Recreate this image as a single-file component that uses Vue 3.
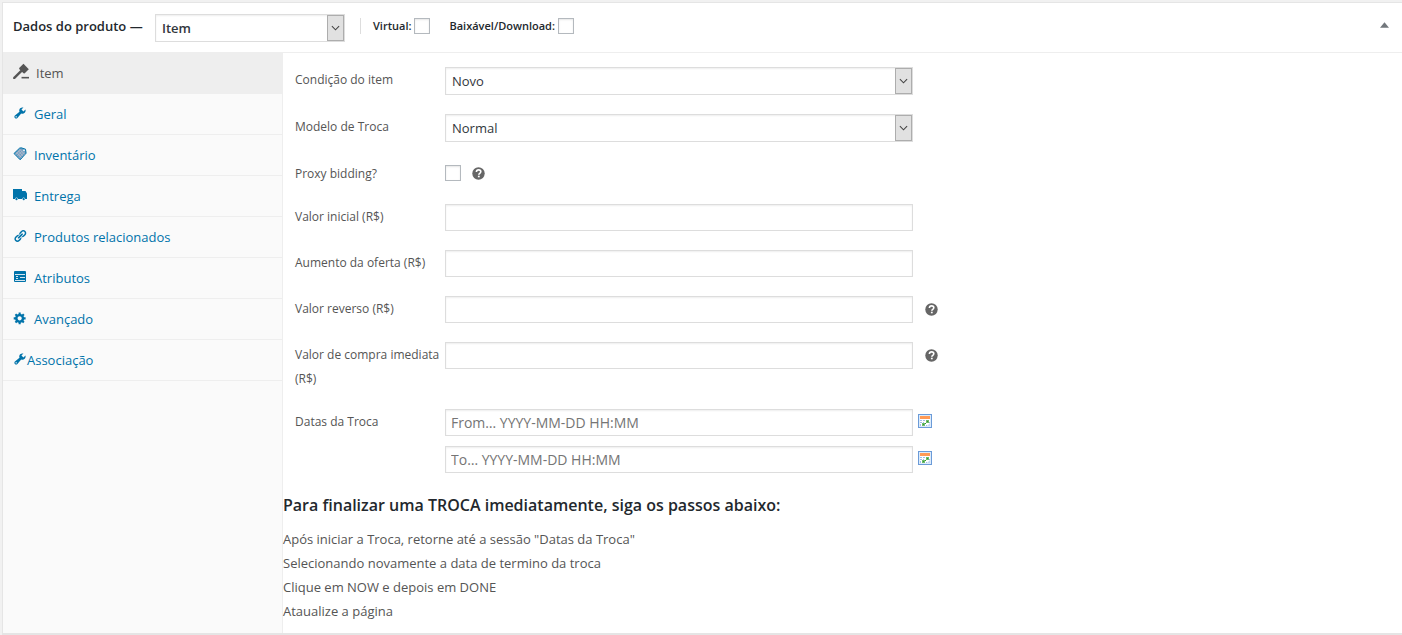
<script setup>
import { ref } from 'vue'

const productType = ref('Item')
const virtual = ref(false)
const downloadable = ref(false)
const proxy = ref(false)
const active = ref('item')

const tabs = [
  { id: 'item', label: 'Item', icon: 'hammer' },
  { id: 'geral', label: 'Geral', icon: 'wrench' },
  { id: 'inventario', label: 'Inventário', icon: 'tag' },
  { id: 'entrega', label: 'Entrega', icon: 'truck' },
  { id: 'relacionados', label: 'Produtos relacionados', icon: 'link' },
  { id: 'atributos', label: 'Atributos', icon: 'card' },
  { id: 'avancado', label: 'Avançado', icon: 'gear' },
  { id: 'associacao', label: 'Associação', icon: 'wrench', tight: true },
]

const selects = ref([
  { id: 'condicao', label: 'Condição do item', value: 'Novo', options: ['Novo', 'Usado'] },
  { id: 'modelo', label: 'Modelo de Troca', value: 'Normal', options: ['Normal', 'Reverso'] },
])

const prices = [
  { id: 'inicial', label: 'Valor inicial (R$)' },
  { id: 'aumento', label: 'Aumento da oferta (R$)' },
  { id: 'reverso', label: 'Valor reverso (R$)', help: true },
  { id: 'compra', label: 'Valor de compra imediata (R$)', help: true },
]

const dates = [
  { id: 'from', label: 'Início', placeholder: 'From… YYYY-MM-DD HH:MM' },
  { id: 'to', label: 'Fim', placeholder: 'To… YYYY-MM-DD HH:MM' },
]

const steps = [
  'Após iniciar a Troca, retorne até a sessão "Datas da Troca"',
  'Selecionando novamente a data de termino da troca',
  'Clique em NOW e depois em DONE',
  'Ataualize a página',
]
</script>

<template>
  <svg class="defs" aria-hidden="true">
    <symbol id="help" viewBox="0 0 13 13">
      <circle cx="6.5" cy="6.5" r="6.2" fill="#666" />
      <path d="M4.4 5c0-1.4 1-2.1 2.2-2.1S8.8 3.6 8.8 4.8c0 1.500-2 1.500-2 3" fill="none" stroke="#fff" stroke-width="1.6" />
      <rect x="5.9" y="8.7" width="1.8" height="1.6" fill="#fff" />
    </symbol>
    <symbol id="calendar" viewBox="0 0 14 14">
      <rect x=".5" y=".5" width="13" height="13" fill="#dcebfb" stroke="#6b9bd8" />
      <rect x="2" y="2" width="10" height="10" fill="#fff" />
      <rect x="2" y="2" width="10" height="3" fill="#ff9a55" />
      <path d="M2 6h2v1H2zM5 6h2v1H5zM8 6h1v1H8zM2 8h2v1H2zM5 8h1v1H5zM11 8h1v1h-1zM2 10h1v2H2zM8 11h1v1H8z" fill="#9fbce6" />
      <path d="M8 6h3v3H8zM4 9h3v3H4z" fill="#6fbb6b" />
      <path d="M9 7h1v1H9zM5 10h1v1H5zM7 9h1v1H7z" fill="#2f9a35" />
      <path d="M12 9v3H9z" fill="#c4d9f3" />
    </symbol>
    <symbol id="hammer" viewBox="0 0 15 15">
      <path d="M.2 13.4 7.3 6.3l1.6 1.6L1.8 15H.2z" />
      <path d="m5.800 4.800 4-4 5 5-4 4-1-.2-4-4z" />
      <path d="M8 13h7v1.500H8z" />
    </symbol>
    <symbol id="wrench" viewBox="0 0 20 20">
      <path d="M16.680 9.770c-1.340 1.340-3.300 1.670-4.950.99l-5.410 6.520c-.99.99-2.590.99-3.580 0s-.99-2.590 0-3.570l6.520-5.420c-.68-1.650-.35-3.610.99-4.950 1.280-1.280 3.120-1.620 4.720-1.060l-2.890 2.890 2.820 2.820 2.860-2.870c.53 1.580.18 3.390-1.080 4.650zM3.810 16.210c.4.390 1.040.39 1.430 0 .4-.4.400-1.040 0-1.430-.39-.4-1.030-.4-1.430 0-.39.39-.39 1.030 0 1.430z" />
    </symbol>
    <symbol id="tag" viewBox="0 0 14 14">
      <path d="M1 6.500 6.500 1.200 8.200.8l4.300 1.400.6 4L7.200 12.800z" fill="#6d9fc2" stroke="#0073aa" />
      <path d="m2.600 7.600 5-5M4.200 9.200l5.500-5.500M5.800 10.800l5.600-5.600M3.600 5.200l5 5.600M5.200 3.600l5 5.600M6.800 2.400l5 5.200" stroke="#c8bfcb" stroke-width=".7" fill="none" />
      <circle cx="11" cy="3.400" r=".8" fill="#fff" />
    </symbol>
    <symbol id="truck" viewBox="0 0 14 14">
      <path d="M0 1h9v2h3.500L14 5.500V11h-1.800a1.500 1.500 0 0 0-3 0H5a1.500 1.500 0 0 0-3 0H0z" />
      <circle cx="3.500" cy="11.200" r="1.100" />
      <circle cx="10.700" cy="11.200" r="1.100" />
    </symbol>
    <symbol id="link" viewBox="0 0 20 20">
      <path d="M17.740 2.760c1.680 1.690 1.680 4.410 0 6.100l-1.530 1.520c-1.120 1.120-2.700 1.470-4.140 1.090l2.620-2.610.76-.77.76-.76c.84-.84.84-2.200 0-3.040-.84-.85-2.200-.85-3.040 0l-.77.76-3.380 3.380c-.37-1.440-.02-3.020 1.100-4.140l1.520-1.530c1.690-1.680 4.420-1.680 6.100 0zM8.590 13.430l5.340-5.340c.42-.42.42-1.100 0-1.520-.44-.43-1.130-.39-1.530 0l-5.330 5.340c-.42.42-.42 1.100 0 1.520.44.430 1.130.39 1.520 0zm-.76 2.290l4.140-4.150c.38 1.440.03 3.020-1.090 4.140l-1.520 1.530c-1.690 1.680-4.410 1.680-6.100 0-1.680-1.680-1.680-4.420 0-6.100l1.530-1.520c1.120-1.120 2.700-1.470 4.140-1.100l-4.140 4.150c-.85.84-.85 2.200 0 3.050.84.840 2.200.84 3.040 0z" />
    </symbol>
    <symbol id="card" viewBox="0 0 14 14">
      <path d="M2 1h10a1 1 0 0 1 1 1v9a1 1 0 0 1-1 1H2a1 1 0 0 1-1-1V2a1 1 0 0 1 1-1z" />
      <path d="M2 4h10v1H2zM2 10h10v1H2zM3 6h2v1H3zM7 7h5v1H7zM3 8h2v1H3z" fill="#d6e6ef" />
    </symbol>
    <symbol id="gear" viewBox="0 0 20 20">
      <path d="M18 12h-2.180c-.17.700-.44 1.350-.81 1.930l1.540 1.540-2.100 2.100-1.540-1.540c-.58.360-1.230.63-1.910.79V19H8v-2.180c-.68-.16-1.330-.43-1.910-.79l-1.540 1.540-2.120-2.120 1.540-1.540c-.36-.58-.63-1.230-.79-1.910H1V9.030h2.170c.16-.7.440-1.350.8-1.940L2.430 5.550l2.100-2.100 1.540 1.540c.58-.37 1.240-.64 1.930-.81V2h3v2.180c.68.160 1.330.43 1.910.79l1.540-1.540 2.120 2.120-1.540 1.540c.36.590.64 1.240.8 1.940H18V12zm-8.500 1.500c1.660 0 3-1.340 3-3s-1.340-3-3-3-3 1.340-3 3 1.340 3 3 3z" />
    </symbol>
  </svg>

  <section class="panel">
    <header class="head">
      <label class="title" for="product-type">Dados do produto —</label>
      <span class="select type">
        <select id="product-type" v-model="productType">
          <option>Item</option>
          <option>Produto simples</option>
        </select>
        <span class="arrow"><svg viewBox="0 0 10 6"><path d="m1 1 4 4 4-4" /></svg></span>
      </span>
      <div class="flags">
        <label>Virtual:<input v-model="virtual" type="checkbox"></label>
        <label>Baixável/Download:<input v-model="downloadable" type="checkbox"></label>
      </div>
      <button class="toggle" type="button" aria-label="Alternar painel">
        <svg viewBox="0 0 8 5"><path d="M0 5 4 0l4 5z" /></svg>
      </button>
    </header>

    <div class="body">
      <nav class="tabs">
        <a
          v-for="t in tabs"
          :key="t.id"
          href="#"
          :class="{ active: active === t.id, tight: t.tight }"
          @click.prevent="active = t.id"
        >
          <svg :class="t.icon"><use :href="'#' + t.icon" /></svg>
          <span>{{ t.label }}</span>
        </a>
      </nav>

      <main class="content">
        <form class="fields" @submit.prevent>
          <div v-for="s in selects" :key="s.id" class="row">
            <label :for="s.id">{{ s.label }}</label>
            <span class="select">
              <select :id="s.id" v-model="s.value">
                <option v-for="o in s.options" :key="o">{{ o }}</option>
              </select>
              <span class="arrow"><svg viewBox="0 0 10 6"><path d="m1 1 4 4 4-4" /></svg></span>
            </span>
          </div>

          <div class="row">
            <label for="proxy">Proxy bidding?</label>
            <span class="check">
              <input id="proxy" v-model="proxy" type="checkbox">
              <svg class="help"><use href="#help" /></svg>
            </span>
          </div>

          <div v-for="p in prices" :key="p.id" class="row">
            <label :for="p.id">{{ p.label }}</label>
            <input :id="p.id" type="text">
            <span v-if="p.help" class="aside"><svg class="help"><use href="#help" /></svg></span>
          </div>

          <div class="row" role="group" aria-labelledby="dates-label">
            <span id="dates-label" class="label">Datas da Troca</span>
            <div class="dates">
              <div v-for="d in dates" :key="d.id" class="date">
                <input :id="d.id" type="text" :placeholder="d.placeholder" :aria-label="d.label">
                <button type="button" :aria-label="'Abrir calendário: ' + d.label">
                  <svg><use href="#calendar" /></svg>
                </button>
              </div>
            </div>
          </div>
        </form>

        <h3>Para finalizar uma TROCA imediatamente, siga os passos abaixo:</h3>
        <p><template v-for="(s, i) in steps" :key="i">{{ s }}<br></template></p>
      </main>
    </div>
  </section>
</template>

<style>
body {
  background: #f1f1f1;
}
</style>

<style scoped>
* {
  box-sizing: border-box;
}
.defs {
  position: absolute;
  width: 0;
  height: 0;
}
.panel {
  margin: 2px 0 0 2px;
  background: #fff;
  border: 1px solid #e5e5e5;
  border-width: 1px 0 2px 1px;
  color: #555;
  font-family: "Segoe UI", "Open Sans", "Noto Sans", sans-serif;
  font-size: 13px;
}
input,
select,
button {
  margin: 0;
  font-family: inherit;
}
button {
  display: flex;
  padding: 0;
  border: 0;
  background: none;
}
.head {
  display: flex;
  align-items: center;
  height: 50px;
  padding: 0 13px 0 10px;
  border-bottom: 1px solid #eee;
  color: #23282d;
}
.title {
  width: 142px;
  padding-bottom: 3px;
  font-size: 13px;
  font-weight: 600;
}
.select {
  position: relative;
  display: flex;
  width: 468px;
  height: 28px;
}
.select select {
  width: 100%;
  height: 100%;
  padding: 0 24px 0 6px;
  border: 1px solid #ddd;
  border-radius: 0;
  background: #fff;
  box-shadow: inset 0 1px 2px rgba(0, 0, 0, 0.07);
  color: #32373c;
  font-size: 13px;
  appearance: none;
}
.type {
  width: 190px;
}
.type select {
  font-weight: 600;
}
.arrow {
  position: absolute;
  top: 1px;
  right: 1px;
  bottom: 1px;
  display: flex;
  align-items: center;
  justify-content: center;
  width: 17px;
  border: 1px solid #adadad;
  background: #e1e1e1;
  pointer-events: none;
}
.arrow svg {
  width: 9px;
  height: 6px;
  fill: none;
  stroke: #444;
  stroke-width: 1.2;
}
.flags {
  display: flex;
  gap: 19px;
  margin: 0 0 3px 15px;
  padding-left: 12px;
  border-left: 1px solid #ddd;
  font-size: 11px;
  font-weight: 600;
  line-height: 16px;
}
.flags label {
  display: flex;
  align-items: center;
  gap: 3px;
}
input[type="checkbox"] {
  width: 16px;
  height: 16px;
  border: 1px solid #b4b9be;
  background: #fff;
  box-shadow: inset 0 1px 2px rgba(0, 0, 0, 0.1);
  appearance: none;
}
.toggle {
  margin: 0 0 5px auto;
}
.toggle svg {
  width: 9px;
  height: 6px;
  fill: #72777c;
}
.body {
  display: flex;
}
.tabs {
  width: 280px;
  flex: none;
  background: #fafafa;
  border-right: 1px solid #eee;
}
.tabs a {
  display: flex;
  align-items: center;
  gap: 7px;
  height: 41px;
  padding-left: 10px;
  border-bottom: 1px solid #eee;
  color: #0073aa;
  font-size: 13px;
  text-decoration: none;
}
.tabs a.active {
  background: #eee;
  color: #555;
}
.tabs a.tight {
  gap: 0;
}
.tabs svg {
  width: 14px;
  height: 14px;
  margin-bottom: 2px;
  fill: currentColor;
}
.tabs svg.hammer {
  width: 16px;
  height: 16px;
  margin-bottom: 4px;
}
.content {
  flex: 1;
  padding: 14px 0 9px;
}
.fields {
  display: grid;
  gap: 18px;
  padding-left: 12px;
}
.row {
  display: flex;
  align-items: flex-start;
}
.row > label,
.label {
  width: 150px;
  padding: 1px 4px 0 0;
  font-size: 12px;
  line-height: 24px;
}
.row > .select,
.row > input,
.dates {
  margin-bottom: 1px;
}
.check {
  display: flex;
  align-items: center;
  gap: 11px;
  height: 24px;
}
.help {
  width: 13px;
  height: 13px;
}
.aside {
  display: flex;
  align-items: center;
  height: 27px;
  margin-left: 12px;
}
input[type="text"] {
  width: 468px;
  height: 27px;
  padding: 0 5px;
  border: 1px solid #ddd;
  background: #fff;
  box-shadow: inset 0 1px 2px rgba(0, 0, 0, 0.07);
  color: #32373c;
  font-size: 14px;
}
input::placeholder {
  color: #757575;
  opacity: 1;
}
.dates {
  display: grid;
  gap: 10px;
}
.date {
  display: flex;
  align-items: center;
  gap: 5px;
}
.date button {
  margin-bottom: 3px;
}
.date svg {
  width: 14px;
  height: 14px;
}
h3 {
  margin: 19px 0 10px;
  color: #23282d;
  font-size: 16px;
  font-weight: 600;
  line-height: 24px;
}
p {
  margin: 0 0 1px;
  line-height: 24px;
}
</style>
